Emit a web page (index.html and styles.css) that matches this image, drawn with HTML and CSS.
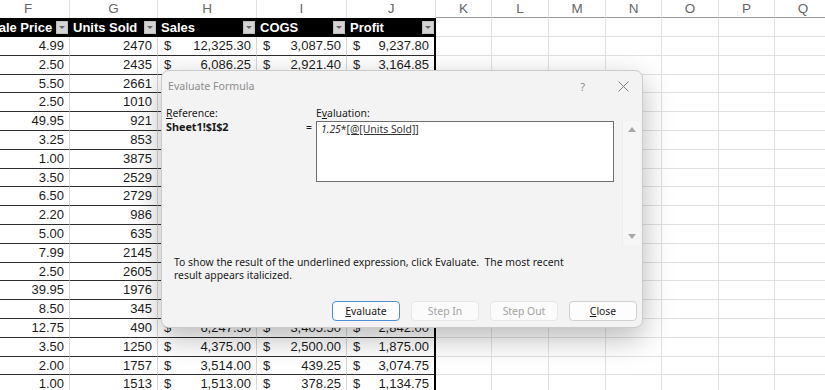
FILE: index.html
```html
<!DOCTYPE html>
<html lang="en">
<head>
  <meta charset="UTF-8" />
  <title>Evaluate Formula</title>
  <link rel="stylesheet" href="styles.css">
</head>
<body>
  <div class="sheet" id="sheet"></div>

  <div class="dialog">
    <div class="dialog-title">
      <span class="title-text">Evaluate Formula</span>
      <span class="help">?</span>
      <svg class="close-x" width="11" height="11" viewBox="0 0 11 11">
        <path d="M0.5 0.5L10.5 10.5M10.5 0.5L0.5 10.5" stroke="#808080" stroke-width="1" fill="none"/>
      </svg>
    </div>
    <div class="dialog-body">
      <div class="ref-col">
        <div class="label"><u>R</u>eference:</div>
        <div class="ref-value">Sheet1!$I$2</div>
      </div>
      <div class="eq">=</div>
      <div class="eval-col">
        <div class="label">E<u>v</u>aluation:</div>
        <div class="eval-box"><i>1.25</i>*<u>[@[Units Sold]]</u></div>
      </div>
      <div class="scroll">
        <span class="arrow up"></span>
        <span class="arrow down"></span>
      </div>
    </div>
    <p class="hint">To show the result of the underlined expression, click Evaluate.&nbsp; The most recent<br>result appears italicized.</p>
    <div class="buttons">
      <button class="btn default"><u>E</u>valuate</button>
      <button class="btn" disabled>Step In</button>
      <button class="btn" disabled>Step Out</button>
      <button class="btn"><u>C</u>lose</button>
    </div>
  </div>

  <script>
    const letters = ["F", "G", "H", "I", "J", "K", "L", "M", "N", "O", "P", "Q"];
    const headers = ["Sale Price", "Units Sold", "Sales", "COGS", "Profit"];
    // rows 3-15 only show price and units: the dialog covers the rest
    const data = [
      [4.99, 2470, "12,325.30", "3,087.50", "9,237.80"],
      [2.50, 2435, "6,086.25", "2,921.40", "3,164.85"],
      [5.50, 2661], [2.50, 1010], [49.95, 921], [3.25, 853], [1.00, 3875],
      [3.50, 2529], [6.50, 2729], [2.20, 986], [5.00, 635], [7.99, 2145],
      [2.50, 2605], [39.95, 1976], [8.50, 345],
      [12.75, 490, "6,247.50", "3,405.50", "2,842.00"],
      [3.50, 1250, "4,375.00", "2,500.00", "1,875.00"],
      [2.00, 1757, "3,514.00", "439.25", "3,074.75"],
      [1.00, 1513, "1,513.00", "378.25", "1,134.75"]
    ];

    const sheet = document.getElementById("sheet");

    function cell(cls, html) {
      const d = document.createElement("div");
      d.className = "cell " + cls;
      d.innerHTML = html || "";
      sheet.appendChild(d);
    }

    letters.forEach((l, i) => cell(i < 5 ? "letter" : "letter out", l));

    headers.forEach(h => cell("head", `<span>${h}</span><span class="filter"></span>`));
    for (let i = 0; i < 7; i++) cell("empty");

    data.forEach(row => {
      const [price, units, sales, cogs, profit] = row;
      cell("num", price.toFixed(2));
      cell("num", units);
      [sales, cogs, profit].forEach(v => cell("acct", v ? `<span>$</span><span>${v}</span>` : ""));
      for (let i = 0; i < 7; i++) cell("empty");
    });
  </script>
</body>
</html>
```

FILE: styles.css
```css
* {
  box-sizing: border-box;
}

html, body {
  margin: 0;
  padding: 0;
  width: 825px;
  height: 390px;
  overflow: hidden;
  background: #fff;
}

.sheet {
  display: grid;
  grid-template-columns: 83px 88px 99px 90px 89px 56px 57px 57px 56px 57px 56px 57px;
  grid-template-rows: 18px 19px;
  grid-auto-rows: 18.8px;
  margin-left: -13px;
  font-family: "Liberation Sans", Arial, sans-serif;
  font-size: 13px;
  color: #1c1c1c;
}

.cell {
  border-right: 1px solid #e1e1e1;
  border-bottom: 1px solid #e1e1e1;
  white-space: nowrap;
  overflow: hidden;
  line-height: 18px;
}

.letter {
  text-align: center;
  color: #666;
  font-size: 13.5px;
  border-bottom: none;
  line-height: 18px;
}

.letter.out {
  border-bottom: 1px solid #9a9a9a;
}

.head {
  background: #000;
  color: #fff;
  font-weight: bold;
  display: flex;
  align-items: center;
  padding-left: 3px;
  border: none;
}

.head .filter {
  margin-left: auto;
  margin-right: 2px;
  width: 12px;
  height: 13px;
  background: #d4d4d4;
  border: 1px solid #bdbdbd;
  position: relative;
}

.head .filter::after {
  content: "";
  position: absolute;
  left: 2px;
  top: 4px;
  border-left: 3px solid transparent;
  border-right: 3px solid transparent;
  border-top: 3px solid #666;
}

.num {
  text-align: right;
  padding-right: 5px;
  border-bottom: 1px solid #2e2e2e;
  border-right: 1px solid #d6d6d6;
}

.acct {
  display: flex;
  justify-content: space-between;
  padding: 0 5px 0 6px;
  border-bottom: 1px solid #2e2e2e;
  border-right: 1px solid #d6d6d6;
}

.acct:nth-child(12n + 5) {
  border-right: 2px solid #000;
}

/* dialog */
.dialog {
  position: absolute;
  left: 161px;
  top: 70px;
  width: 482px;
  height: 258px;
  background: #f3f3f3;
  border: 1px solid #cbcbcb;
  border-radius: 8px;
  box-shadow: 0 10px 30px rgba(0, 0, 0, 0.28);
  display: flex;
  flex-direction: column;
  font-family: "Noto Sans", "Open Sans", sans-serif;
  font-size: 10.4px;
  color: #1a1a1a;
}

.dialog-title {
  height: 30px;
  display: flex;
  align-items: center;
  padding: 0 13px 0 6px;
}

.title-text {
  color: #8c8c8c;
  font-size: 10.6px;
}

.help {
  margin-left: auto;
  margin-right: 33px;
  color: #8c8c8c;
  font-size: 11px;
}

.dialog-body {
  display: grid;
  grid-template-columns: 140px 10px 298px 1fr;
  margin-top: 5px;
  padding-left: 4px;
}

.label {
  line-height: 14px;
  height: 14px;
}

.ref-value {
  font-weight: bold;
  font-size: 10.8px;
  line-height: 14px;
}

.eq {
  padding-top: 14px;
  line-height: 14px;
}

.eval-box {
  margin-top: 1px;
  height: 61px;
  background: #fff;
  border: 1px solid #6f6f6f;
  padding: 1px 4px;
  line-height: 12px;
  color: #333;
}

.scroll {
  margin: 15px 2px 0 8px;
  height: 124px;
  background: #f6f6f6;
  border-left: 1px solid #ececec;
  display: flex;
  flex-direction: column;
  justify-content: space-between;
  align-items: center;
  padding: 6px 0;
}

.arrow {
  width: 0;
  height: 0;
  border-left: 4px solid transparent;
  border-right: 4px solid transparent;
}

.arrow.up {
  border-bottom: 5px solid #a8a8a8;
}

.arrow.down {
  border-top: 5px solid #a8a8a8;
}

.hint {
  margin: 11px 0 0 0;
  padding-left: 12px;
  line-height: 13px;
}

.buttons {
  margin-top: auto;
  display: flex;
  justify-content: flex-end;
  gap: 11px;
  padding: 0 5px 6px 0;
}

.btn {
  width: 68px;
  height: 20px;
  font-family: "Noto Sans", "Open Sans", sans-serif;
  font-size: 10.4px;
  color: #1a1a1a;
  background: #fdfdfd;
  border: 1px solid #d0d0d0;
  border-radius: 4px;
  padding: 0;
}

.btn.default {
  border-color: #4f8fd6;
}

.btn:disabled {
  color: #a3a3a3;
  background: #fbfbfb;
  border-color: #e6e6e6;
}
```
